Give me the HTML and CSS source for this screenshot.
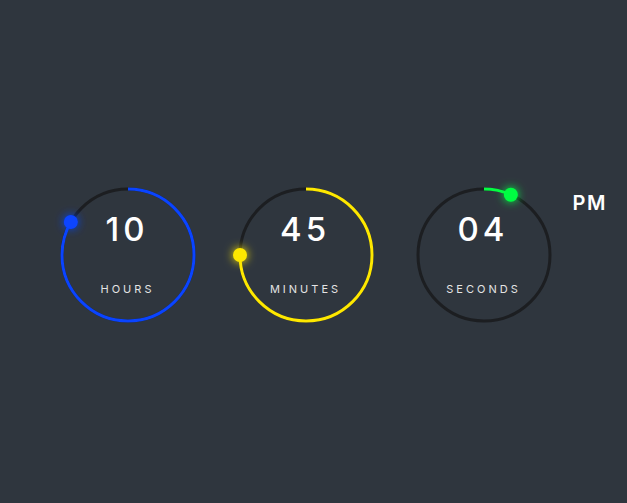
FILE: index.html
```html
<!DOCTYPE html>
<html lang="en">
<head>
<meta charset="utf-8">
<title>Clock</title>
<link rel="stylesheet" href="styles.css">
</head>
<body>
<svg class="defs" width="0" height="0" aria-hidden="true">
  <defs>
    <filter id="glow" x="-200%" y="-200%" width="500%" height="500%">
      <feGaussianBlur in="SourceGraphic" stdDeviation="5" result="b"/>
      <feMerge>
        <feMergeNode in="b"/>
        <feMergeNode in="SourceGraphic"/>
      </feMerge>
    </filter>
  </defs>
</svg>
<main class="time">
  <div class="unit unit-hours">
    <svg class="ring" viewBox="0 0 136 136" width="136" height="136">
      <circle class="track" cx="68" cy="68" r="66"/>
      <circle class="progress" cx="68" cy="68" r="66" stroke-dasharray="414.69" stroke-dashoffset="69.12" transform="rotate(-90 68 68)"/>
      <circle class="dot" cx="10.84" cy="35" r="7" filter="url(#glow)"/>
    </svg>
    <div class="face">
      <div class="num">10</div>
      <div class="label">HOURS</div>
    </div>
  </div>
  <div class="unit unit-minutes">
    <svg class="ring" viewBox="0 0 136 136" width="136" height="136">
      <circle class="track" cx="68" cy="68" r="66"/>
      <circle class="progress" cx="68" cy="68" r="66" stroke-dasharray="414.69" stroke-dashoffset="103.67" transform="rotate(-90 68 68)"/>
      <circle class="dot" cx="2" cy="68" r="7" filter="url(#glow)"/>
    </svg>
    <div class="face">
      <div class="num">45</div>
      <div class="label">MINUTES</div>
    </div>
  </div>
  <div class="unit unit-seconds">
    <svg class="ring" viewBox="0 0 136 136" width="136" height="136">
      <circle class="track" cx="68" cy="68" r="66"/>
      <circle class="progress" cx="68" cy="68" r="66" stroke-dasharray="414.69" stroke-dashoffset="387.05" transform="rotate(-90 68 68)"/>
      <circle class="dot" cx="94.85" cy="7.71" r="7" filter="url(#glow)"/>
    </svg>
    <div class="face">
      <div class="num">04</div>
      <div class="label">SECONDS</div>
    </div>
  </div>
  <div class="ampm">PM</div>
</main>
</body>
</html>
```
FILE: styles.css
```css
html, body {
  margin: 0;
  padding: 0;
  height: 100%;
}
body {
  background: #2f363e;
  font-family: "Inter", "Noto Sans", sans-serif;
  color: #ffffff;
  overflow: hidden;
}
.defs {
  display: block;
  width: 0;
  height: 0;
}
.time {
  display: flex;
  align-items: flex-start;
  gap: 42px;
  padding-top: 186.5px;
  padding-left: 59.5px;
}
.unit {
  display: grid;
  width: 136px;
  height: 136px;
}
.unit > * {
  grid-area: 1 / 1;
}
.unit-hours { --clr: #0a44ff; }
.unit-minutes { --clr: #fee800; }
.unit-seconds { --clr: #04fc43; }
.ring {
  overflow: visible;
}
.track {
  fill: none;
  stroke: #1c1e21;
  stroke-width: 3;
}
.progress {
  fill: none;
  stroke: var(--clr);
  stroke-width: 3;
}
.dot {
  fill: var(--clr);
}
.face {
  display: flex;
  flex-direction: column;
  align-items: center;
}
.num {
  margin-top: 26px;
  font-size: 33px;
  line-height: 33px;
  font-weight: 500;
  letter-spacing: 4px;
  padding-left: 4px;
  margin-left: -5px;
}
.label {
  margin-top: 38px;
  font-size: 11px;
  line-height: 11px;
  font-weight: 400;
  letter-spacing: 3px;
  color: #e4e4e4;
}
.ampm {
  margin-top: 6px;
  margin-left: -21px;
  font-size: 20px;
  line-height: 20px;
  font-weight: 600;
  letter-spacing: 1.5px;
}
```
